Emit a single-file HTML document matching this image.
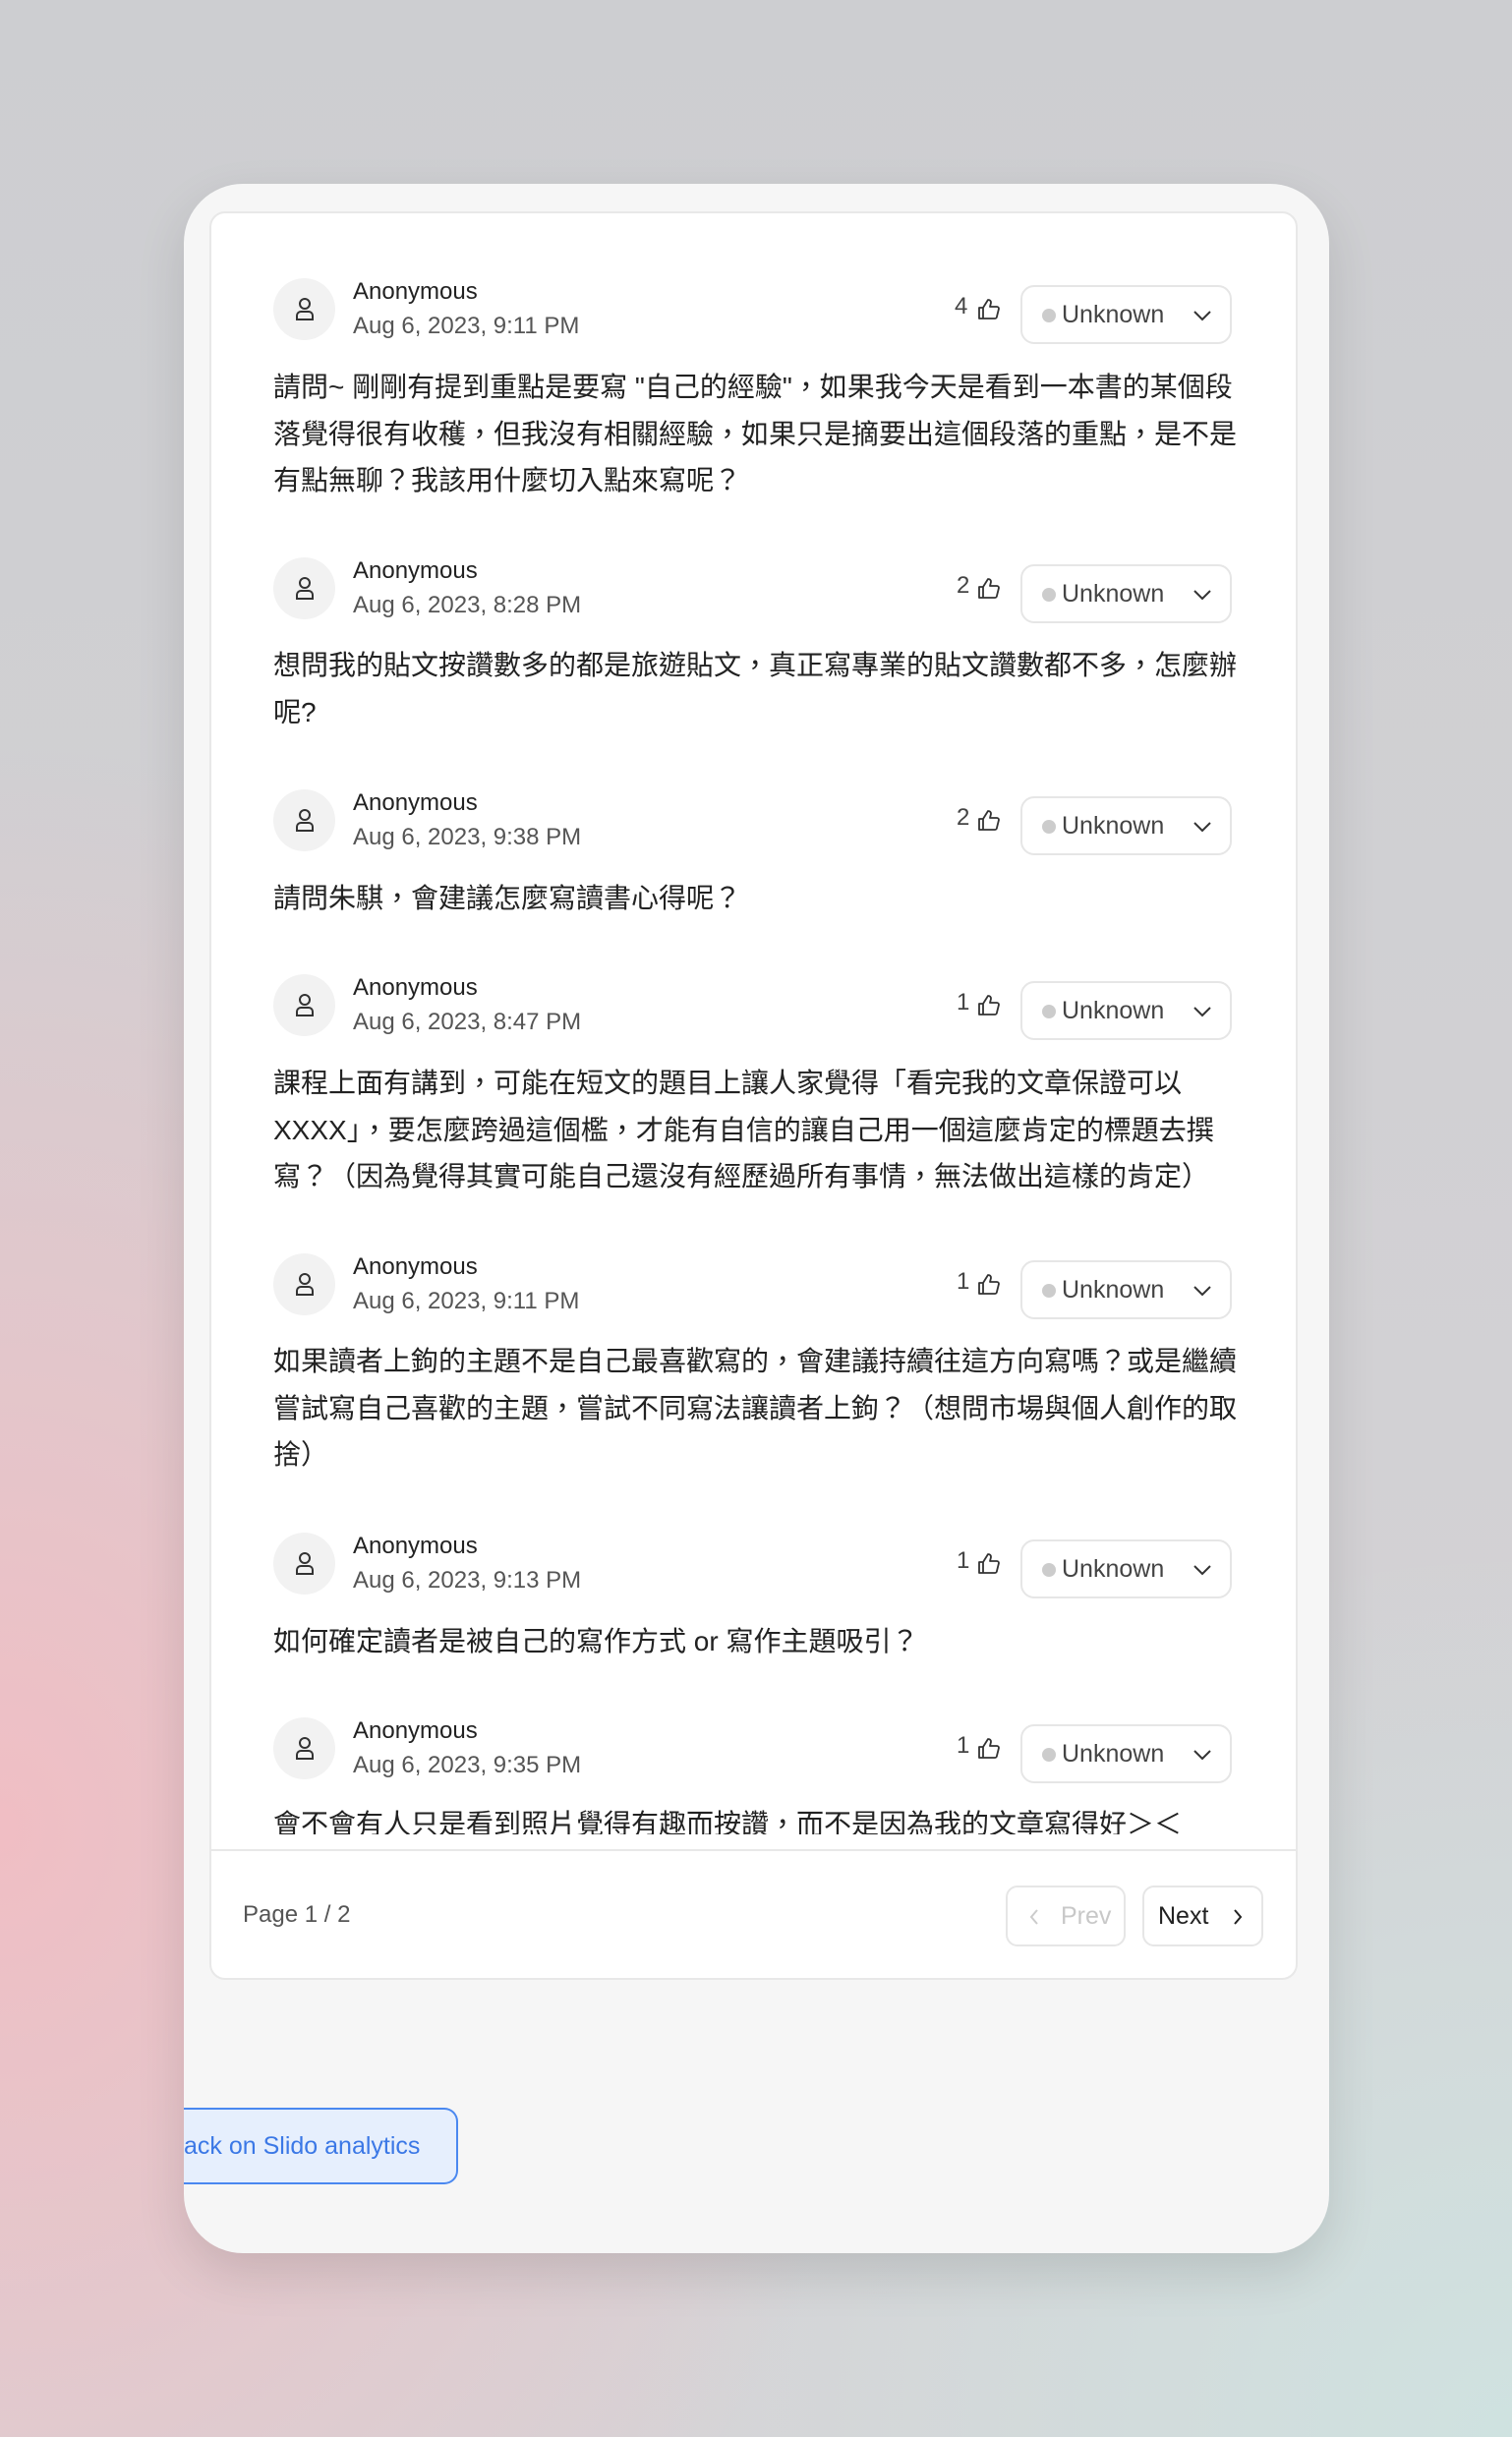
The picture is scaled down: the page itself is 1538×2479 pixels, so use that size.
<!DOCTYPE html>
<html><head><meta charset="utf-8"><style>
*{margin:0;padding:0;box-sizing:border-box}
body{width:1538px;height:2479px;overflow:hidden;position:relative;font-family:"Liberation Sans","Noto Sans CJK TC",sans-serif;
background:radial-gradient(ellipse 900px 1100px at 0% 75%,#f0bec4 0%,rgba(240,190,196,0) 100%),radial-gradient(ellipse 900px 900px at 100% 100%,#cfe2e0 0%,rgba(207,226,224,0) 100%),linear-gradient(#cdced1,#d6d3d6);}
.outer{position:absolute;left:187px;top:187px;width:1165px;height:2105px;background:#f6f6f6;border-radius:60px;box-shadow:0 20px 50px rgba(0,0,0,.12);overflow:hidden}
.inner{position:absolute;left:213px;top:215px;width:1107px;height:1799px;background:#fff;border:2px solid #e8e8e8;border-radius:16px}
.view{position:absolute;left:213px;top:215px;width:1107px;height:1651px;overflow:hidden}
.a{position:absolute}
.av{position:absolute;width:63px;height:63px;border-radius:50%;background:#f2f2f2}
.nm{position:absolute;font-size:24px;color:#222;line-height:30px}
.dt{position:absolute;font-size:24px;color:#555;line-height:30px}
.cnt{position:absolute;font-size:24px;color:#444;line-height:30px}
.dd{position:absolute;width:215px;height:60px;border:2px solid #e6e6e6;border-radius:14px;background:#fff}
.dd .dot{position:absolute;left:20px;top:22px;width:14px;height:14px;border-radius:50%;background:#ccc}
.dd .t{position:absolute;left:40px;top:13px;font-size:25px;color:#444;line-height:30px}
.dd svg{position:absolute;left:172px;top:22px}
.tx{position:absolute;left:278px;width:990px;font-size:28px;line-height:47.5px;color:#222}
.btn{position:absolute;border:2px solid #e6e6e6;border-radius:12px;background:#fff;font-size:25px;line-height:58px}
</style></head><body>
<div class="outer"></div>
<div class="inner"></div>
<div id="items"></div>
<div class="a" style="left:213px;top:1881px;width:1107px;height:2px;background:#e8e8e8"></div>
<div class="a" style="left:247px;top:1933px;font-size:24px;color:#555;line-height:30px">Page 1 / 2</div>
<div class="btn" style="left:1023px;top:1918px;width:122px;height:62px;color:#c8c8c8">
<svg class="a" style="left:20px;top:20px" width="14" height="20" viewBox="0 0 14 20"><path d="M10 3L4 10l6 7" fill="none" stroke="#ccc" stroke-width="2"/></svg><span class="a" style="left:54px;top:0">Prev</span></div>
<div class="btn" style="left:1162px;top:1918px;width:123px;height:62px;color:#222">
<span class="a" style="left:14px;top:0">Next</span><svg class="a" style="left:88px;top:20px" width="14" height="20" viewBox="0 0 14 20"><path d="M4 3l6 7-6 7" fill="none" stroke="#222" stroke-width="2"/></svg></div>
<div class="a" style="left:187px;top:2144px;width:279px;height:78px;background:#e6effd;border:2px solid #4a88f0;border-left:none;border-radius:0 14px 14px 0;overflow:hidden">
<span class="a" style="left:0;top:22px;font-size:25px;color:#3b78e6;line-height:30px;white-space:nowrap">ack on Slido analytics</span></div>
<script>
const items=[
[315,"4",394,'請問~ 剛剛有提到重點是要寫 "自己的經驗"，如果我今天是看到一本書的某個段落覺得很有收穫，但我沒有相關經驗，如果只是摘要出這個段落的重點，是不是有點無聊？我該用什麼切入點來寫呢？',"Aug 6, 2023, 9:11 PM"],
[599,"2",677,"想問我的貼文按讚數多的都是旅遊貼文，真正寫專業的貼文讚數都不多，怎麼辦呢?","Aug 6, 2023, 8:28 PM"],
[835,"2",914,"請問朱騏，會建議怎麼寫讀書心得呢？","Aug 6, 2023, 9:38 PM"],
[1023,"1",1102,"課程上面有講到，可能在短文的題目上讓人家覺得「看完我的文章保證可以XXXX」，要怎麼跨過這個檻，才能有自信的讓自己用一個這麼肯定的標題去撰寫？（因為覺得其實可能自己還沒有經歷過所有事情，無法做出這樣的肯定）","Aug 6, 2023, 8:47 PM"],
[1307,"1",1385,"如果讀者上鉤的主題不是自己最喜歡寫的，會建議持續往這方向寫嗎？或是繼續嘗試寫自己喜歡的主題，嘗試不同寫法讓讀者上鉤？（想問市場與個人創作的取捨）","Aug 6, 2023, 9:11 PM"],
[1591,"1",1670,"如何確定讀者是被自己的寫作方式 or 寫作主題吸引？","Aug 6, 2023, 9:13 PM"],
[1779,"1",1856,"會不會有人只是看到照片覺得有趣而按讚，而不是因為我的文章寫得好＞＜","Aug 6, 2023, 9:35 PM"]];
let h='<div class="view"><div class="a" style="left:-213px;top:-215px;width:1538px;height:2479px">';
for(const [c,n,s,t,d] of items){
h+=`<div class="av" style="left:278px;top:${c-32}px"><svg class="a" style="left:21px;top:18px" width="22" height="26" viewBox="0 0 22 26"><circle cx="11" cy="8" r="5" fill="none" stroke="#333" stroke-width="2"/><path d="M3 24v-4a4 4 0 0 1 4-4h8a4 4 0 0 1 4 4v4z" fill="none" stroke="#333" stroke-width="2"/></svg></div>
<div class="nm" style="left:359px;top:${c-33}px">Anonymous</div>
<div class="dt" style="left:359px;top:${c+2}px">${d}</div>
<div class="cnt" style="left:${n=="4"?971:973}px;top:${c-18}px">${n}</div>
<svg class="a" style="left:994px;top:${c-13}px" width="24" height="24" viewBox="0 0 24 24"><path d="M2 11h4v11H2zM6 11l5-8c2 0 3 1 3 3l-1 4h7a2 2 0 0 1 2 2l-2 8a2 2 0 0 1-2 2H6" fill="none" stroke="#333" stroke-width="1.8" stroke-linejoin="round"/></svg>
<div class="dd" style="left:1038px;top:${c-25}px"><span class="dot"></span><span class="t">Unknown</span><svg width="22" height="14" viewBox="0 0 22 14"><path d="M3 3l8 8 8-8" fill="none" stroke="#333" stroke-width="2"/></svg></div>
<div class="tx" style="top:${s-24}px">${t}</div>`;}
h+='</div></div>';
document.getElementById('items').innerHTML=h;
</script>
</body></html>
